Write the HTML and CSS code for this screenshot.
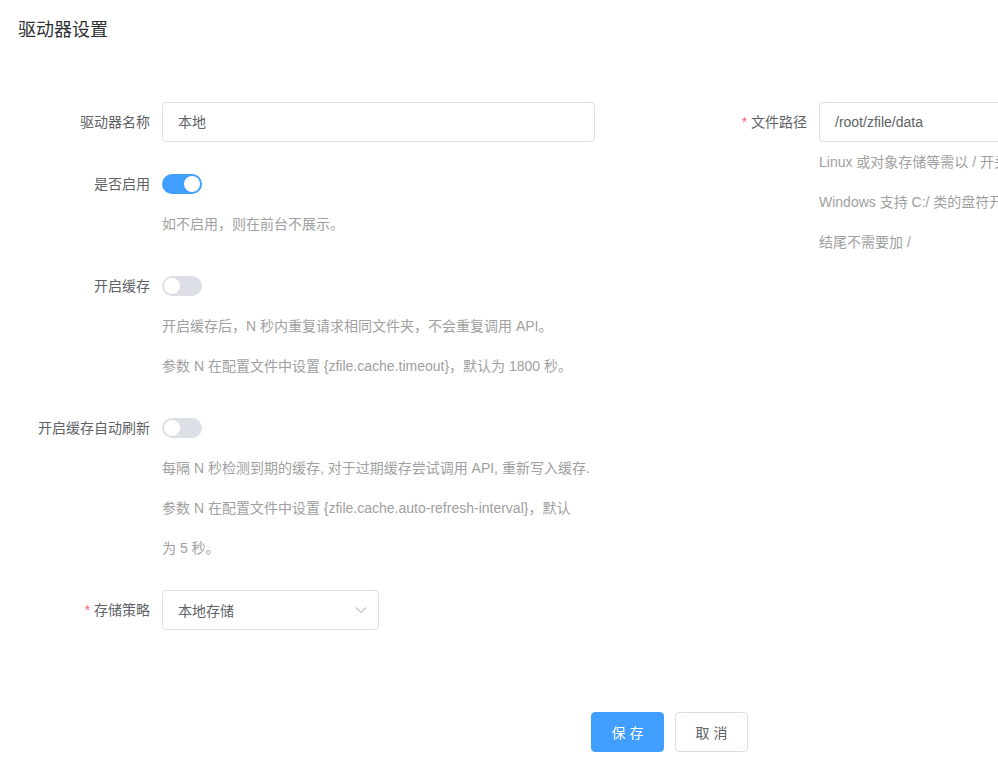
FILE: index.html
```html
<!DOCTYPE html>
<html lang="zh-CN">
<head>
<meta charset="utf-8">
<title>驱动器设置</title>
<link rel="stylesheet" href="styles.css">
</head>
<body>
<div class="page">
  <div class="header"><h1 class="title">驱动器设置</h1></div>
  <div class="form">
    <div class="col">
      <div class="item">
        <label class="label">驱动器名称</label>
        <div class="content">
          <div class="input">本地</div>
        </div>
      </div>
      <div class="item">
        <label class="label">是否启用</label>
        <div class="content">
          <div class="switch-row"><span class="switch on"><span class="knob"></span></span></div>
          <div class="help">如不启用，则在前台不展示。</div>
        </div>
      </div>
      <div class="item">
        <label class="label">开启缓存</label>
        <div class="content">
          <div class="switch-row"><span class="switch"><span class="knob"></span></span></div>
          <div class="help">开启缓存后，N 秒内重复请求相同文件夹，不会重复调用 API。</div>
          <div class="help">参数 N 在配置文件中设置 {zfile.cache.timeout}，默认为 1800 秒。</div>
        </div>
      </div>
      <div class="item">
        <label class="label">开启缓存自动刷新</label>
        <div class="content">
          <div class="switch-row"><span class="switch"><span class="knob"></span></span></div>
          <div class="help nowrap">每隔 N 秒检测到期的缓存, 对于过期缓存尝试调用 API, 重新写入缓存.</div>
          <div class="help nowrap">参数 N 在配置文件中设置 {zfile.cache.auto-refresh-interval}，默认<br>为 5 秒。</div>
        </div>
      </div>
      <div class="item">
        <label class="label"><span class="req">*</span> 存储策略</label>
        <div class="content">
          <div class="select">
            <span>本地存储</span>
            <svg class="arrow" width="12" height="8" viewBox="0 0 12 8"><path d="M1 1.5 L6 6.5 L11 1.5" fill="none" stroke="#c0c4cc" stroke-width="1.2"/></svg>
          </div>
        </div>
      </div>
    </div>
    <div class="col">
      <div class="item">
        <label class="label"><span class="req">*</span> 文件路径</label>
        <div class="content">
          <div class="input">/root/zfile/data</div>
          <div class="help nowrap">Linux 或对象存储等需以 / 开头</div>
          <div class="help nowrap">Windows 支持 C:/ 类的盘符开头</div>
          <div class="help nowrap">结尾不需要加 /</div>
        </div>
      </div>
    </div>
  </div>
  <div class="footer">
    <button class="btn primary">保 存</button>
    <button class="btn">取 消</button>
  </div>
</div>
</body>
</html>
```

FILE: styles.css
```css
html, body {
  margin: 0;
  padding: 0;
  background: #fff;
  overflow: hidden;
}
body {
  font-family: "Liberation Sans", "Noto Sans CJK SC", sans-serif;
  color: #606266;
  width: 998px;
  height: 767px;
}
.page {
  width: 998px;
  overflow: hidden;
}
.header {
  padding: 18px 18px 0;
}
.title {
  margin: 0;
  font-size: 18px;
  line-height: 24px;
  font-weight: normal;
  color: #303133;
}
.form {
  display: flex;
  gap: 74px;
  margin-top: 60px;
  padding-left: 12px;
  width: 1300px;
}
.col {
  width: 583px;
  flex: none;
}
.item {
  display: flex;
  margin-bottom: 22px;
}
.label {
  width: 150px;
  flex: none;
  box-sizing: border-box;
  padding-right: 12px;
  text-align: right;
  font-size: 14px;
  line-height: 40px;
  color: #606266;
}
.req {
  color: #f56c6c;
}
.content {
  flex: 1;
  min-width: 0;
}
.input {
  height: 40px;
  box-sizing: border-box;
  border: 1px solid #dcdfe6;
  border-radius: 4px;
  padding: 0 15px;
  font-size: 14px;
  line-height: 38px;
  color: #606266;
}
.help {
  font-size: 14px;
  line-height: 40px;
  color: #a0a0a0;
}
.nowrap {
  white-space: nowrap;
}
.switch-row {
  height: 40px;
  display: flex;
  align-items: center;
}
.switch {
  position: relative;
  width: 40px;
  height: 20px;
  border-radius: 10px;
  background: #dcdfe6;
  display: inline-block;
}
.switch.on {
  background: #409eff;
}
.knob {
  position: absolute;
  top: 2px;
  left: 2px;
  width: 16px;
  height: 16px;
  border-radius: 50%;
  background: #fff;
}
.switch.on .knob {
  left: 22px;
}
.select {
  width: 217px;
  height: 40px;
  box-sizing: border-box;
  border: 1px solid #dcdfe6;
  border-radius: 4px;
  padding: 0 11px 0 15px;
  display: flex;
  align-items: center;
  justify-content: space-between;
  font-size: 14px;
  color: #606266;
}
.footer {
  display: flex;
  gap: 11px;
  margin-top: 60px;
  padding-left: 591px;
}
.btn {
  height: 40px;
  width: 73px;
  box-sizing: border-box;
  border: 1px solid #dcdfe6;
  border-radius: 4px;
  background: #fff;
  color: #606266;
  font-family: inherit;
  font-size: 14px;
  padding: 0;
}
.btn.primary {
  background: #409eff;
  border-color: #409eff;
  color: #fff;
}
```
